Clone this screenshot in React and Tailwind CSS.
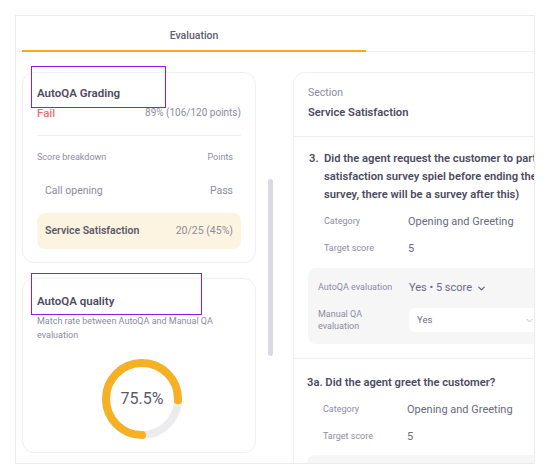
import { ChevronDown } from 'lucide-react';

const font = { fontFamily: 'Roboto, "Noto Sans", sans-serif' };

function Donut({ value }) {
  const r = 36;
  const c = 2 * Math.PI * r;
  return (
    <div className="relative w-[80px] h-[80px]">
      <svg width="80" height="80" viewBox="0 0 80 80" className="rotate-90">
        <circle cx="40" cy="40" r={r} fill="none" stroke="#ececee" strokeWidth="8" />
        <circle
          cx="40"
          cy="40"
          r={r}
          fill="none"
          stroke="#f6b024"
          strokeWidth="8"
          strokeLinecap="round"
          strokeDasharray={`${(value / 100) * c} ${c}`}
        />
      </svg>
      <div className="absolute inset-0 flex items-center justify-center text-[16px] text-[#5b5a6e]">
        {value}%
      </div>
    </div>
  );
}

function InfoRow({ label, value, className = '' }) {
  return (
    <div className={`flex items-center h-[16px] ${className}`}>
      <span className="w-[84px] shrink-0 text-[9px] text-[#8e8d9e]">{label}</span>
      <span className="text-[11px] text-[#6b6a7c]">{value}</span>
    </div>
  );
}

export default function App() {
  return (
    <div className="relative w-[548px] h-[474px] bg-white pt-[15px] pl-[15px]" style={font}>
      <div className="w-[520px] h-[449px] border border-[#ececec] overflow-hidden">
        {/* tabs */}
        <div className="h-[36px] pl-[6px] flex border-b border-[#f0f0f0]">
          <div className="w-[344px] shrink-0 h-[36px] flex items-center justify-center pt-[6px] border-b-2 border-[#f6a91c] text-[10.5px] font-medium text-[#5e5d72]">
            Evaluation
          </div>
          <div className="w-[344px] shrink-0 h-[36px]" />
        </div>

        <div className="flex pt-[20px] pl-[6px]">
          {/* left column */}
          <div className="w-[234px] shrink-0 flex flex-col gap-[15px]">
            <div className="border border-[#f0f0f2] rounded-xl pt-[13px] px-[14px] pb-[13px]">
              <div className="text-[11.5px] leading-[14px] font-semibold text-[#4c4b60]">AutoQA Grading</div>
              <div className="mt-[6px] flex justify-between items-center leading-[14px]">
                <span className="text-[11.5px] font-medium text-[#f26d78]">Fail</span>
                <span className="text-[10px] text-[#8d8c9c]">89% (106/120 points)</span>
              </div>
              <div className="mt-[15px] border-t border-[#f0f0f2]" />
              <div className="mt-[15px] flex justify-between leading-[12px] text-[9px] text-[#8d8c9c]">
                <span>Score breakdown</span>
                <span className="pr-[8px]">Points</span>
              </div>
              <div className="mt-[21px] px-[8px] flex justify-between leading-[14px] text-[10.5px] text-[#8d8c9c]">
                <span>Call opening</span>
                <span>Pass</span>
              </div>
              <div className="mt-[15px] h-[36px] px-[8px] flex items-center justify-between rounded-lg bg-[#fdf3e1] text-[10.5px]">
                <span className="font-semibold text-[#5a596c]">Service Satisfaction</span>
                <span className="text-[#8d8c9c]">20/25 (45%)</span>
              </div>
            </div>

            <div className="border border-[#f0f0f2] rounded-xl pt-[15px] px-[14px] pb-[13px]">
              <div className="text-[11.5px] leading-[14px] font-semibold text-[#4c4b60]">AutoQA quality</div>
              <p className="mt-[6px] text-[9px] leading-[14px] text-[#8d8c9c]">
                Match rate between AutoQA and Manual QA
                <br />
                evaluation
              </p>
              <div className="mt-[17px] pl-[6px] flex justify-center">
                <Donut value={75.5} />
              </div>
            </div>
          </div>

          {/* scrollbar */}
          <div className="ml-[12px] mt-[107px] w-[5px] h-[177px] rounded-full bg-[#d9d9e1] shrink-0" />

          {/* right column */}
          <div className="ml-[20px] w-[300px] shrink-0 border border-[#f0f0f2] rounded-xl">
            <div className="pt-[13px] px-[14px] pb-[15px] border-b border-[#f0f0f2]">
              <div className="text-[10.5px] leading-[14px] text-[#8d8c9c]">Section</div>
              <div className="mt-[5px] text-[11.2px] leading-[16px] font-semibold text-[#4c4b60]">
                Service Satisfaction
              </div>
            </div>

            <div className="pt-[13px] px-[14px] pb-[14px] border-b border-[#f0f0f2]">
              <div className="flex text-[11.2px] leading-[18px] font-semibold text-[#4c4b60] whitespace-nowrap">
                <span className="w-[15px] shrink-0 ml-[1px]">3.</span>
                <div>
                  <div>Did the agent request the customer to participate in the</div>
                  <div>satisfaction survey spiel before ending the call? (If there is no</div>
                  <div>survey, there will be a survey after this)</div>
                </div>
              </div>
              <div className="pl-[16px]">
                <InfoRow className="mt-[10px]" label="Category" value="Opening and Greeting" />
                <InfoRow className="mt-[11px]" label="Target score" value="5" />
              </div>
              <div className="mt-[11px] rounded-lg bg-[#f6f6f7] pt-[13px] pb-[12px] px-[10px]">
                <div className="flex items-center h-[14px]">
                  <span className="w-[91px] shrink-0 text-[9px] text-[#8d8c9c]">AutoQA evaluation</span>
                  <span className="flex items-center gap-[4px] text-[11px] text-[#6b6a7c]">
                    Yes • 5 score
                    <ChevronDown size={11} strokeWidth={2.5} className="text-[#5c5b70]" />
                  </span>
                </div>
                <div className="mt-[13px] flex items-center">
                  <span className="w-[91px] shrink-0 text-[9px] leading-[12px] text-[#8d8c9c]">
                    Manual QA
                    <br />
                    evaluation
                  </span>
                  <div className="w-[130px] shrink-0 h-[24px] rounded-md bg-white flex items-center justify-between pl-[8px] pr-[4px]">
                    <span className="text-[9.5px] text-[#6b6a7c]">Yes</span>
                    <ChevronDown size={11} className="text-[#b9b8c4]" />
                  </div>
                </div>
              </div>
            </div>

            <div className="pt-[15px] px-[13px]">
              <div className="text-[11.2px] leading-[18px] font-semibold text-[#4c4b60]">
                3a. Did the agent greet the customer?
              </div>
              <div className="pl-[16px]">
                <InfoRow className="mt-[10px]" label="Category" value="Opening and Greeting" />
                <InfoRow className="mt-[11px]" label="Target score" value="5" />
              </div>
              <div className="mt-[10px] h-[40px] rounded-lg bg-[#f6f6f7]" />
            </div>
          </div>
        </div>
      </div>

      {/* highlight frames */}
      <div className="absolute left-[31px] top-[66px] w-[135px] h-[42px] border border-[#8f17f0]" />
      <div className="absolute left-[31px] top-[273px] w-[171px] h-[42px] border border-[#8f17f0]" />
    </div>
  );
}
